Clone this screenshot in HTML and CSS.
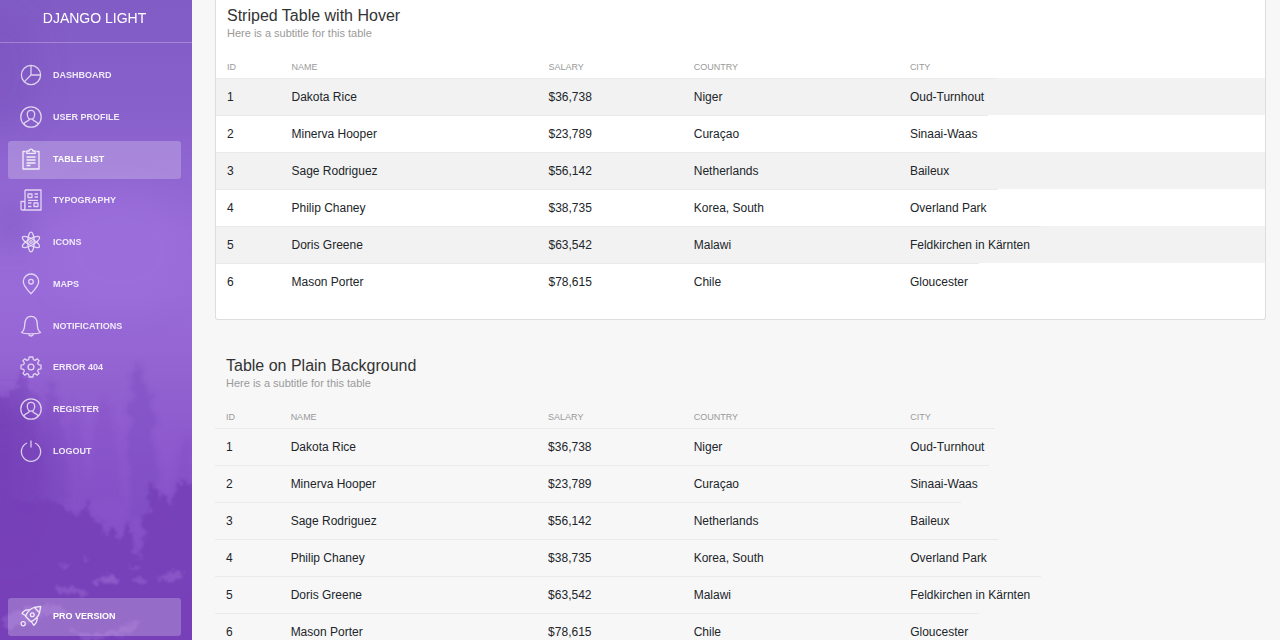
FILE: index.html
```html
<!DOCTYPE html>
<html lang="en">
<head>
<meta charset="utf-8">
<title>Table List</title>
<link rel="stylesheet" href="styles.css">
</head>
<body>
<div class="wrapper">
  <aside class="sidebar">
    <svg class="scene" viewBox="0 0 192 640" preserveAspectRatio="xMidYMid slice" aria-hidden="true">
      <defs>
        <linearGradient id="sky" x1="0" y1="0" x2="0" y2="1">
          <stop offset="0" stop-color="#815cc5"/>
          <stop offset=".17" stop-color="#8860cb"/>
          <stop offset=".36" stop-color="#976bd8"/>
          <stop offset=".46" stop-color="#996bd9"/>
          <stop offset=".58" stop-color="#9363d1"/>
          <stop offset=".74" stop-color="#8b56cc"/>
          <stop offset=".84" stop-color="#8650c8"/>
          <stop offset="1" stop-color="#7b44bd"/>
        </linearGradient>
        <linearGradient id="lefttree" x1="0" y1="0" x2="1" y2="0">
          <stop offset="0" stop-color="#743eb5" stop-opacity=".75"/>
          <stop offset="1" stop-color="#7a47bd" stop-opacity=".35"/>
        </linearGradient>
        <filter id="soft" x="-50%" y="-50%" width="200%" height="200%"><feGaussianBlur stdDeviation="14"/></filter>
        <filter id="rough" x="-20%" y="-20%" width="140%" height="140%">
          <feTurbulence type="fractalNoise" baseFrequency=".2" numOctaves="3" seed="4"/>
          <feDisplacementMap in="SourceGraphic" scale="12" xChannelSelector="R" yChannelSelector="G"/>
          <feGaussianBlur stdDeviation="1.1"/>
        </filter>
        <filter id="mist" x="-20%" y="-20%" width="140%" height="140%">
          <feTurbulence type="fractalNoise" baseFrequency=".15" numOctaves="3" seed="9"/>
          <feDisplacementMap in="SourceGraphic" scale="14" xChannelSelector="R" yChannelSelector="G"/>
          <feGaussianBlur stdDeviation="2"/>
        </filter>
      </defs>
      <rect width="192" height="640" fill="url(#sky)"/>
      <g filter="url(#soft)">
        <ellipse cx="10" cy="225" rx="20" ry="26" fill="#7e56c2" opacity=".5"/>
        <ellipse cx="120" cy="250" rx="70" ry="60" fill="#9e70de" opacity=".4"/>
        <ellipse cx="0" cy="70" rx="40" ry="60" fill="#7850bd" opacity=".4"/>
        <ellipse cx="10" cy="480" rx="46" ry="80" fill="#7440b7" opacity=".8"/>
      </g>
      <g filter="url(#mist)" fill="#7b49be">
        <path d="M138 362L144 382 154 395 147 398 158 425 150 430 160 475 148 520H130L127 440 133 420 124 415 134 395 129 385Z" opacity=".45"/>
        <path d="M103 392L111 415 116 440 123 500H86L93 435 98 410Z" opacity=".25"/>
        <path d="M52 380L60 410 66 440 70 500H36L43 430 46 400Z" opacity=".4"/>
        <path d="M75 395L82 430 88 500H62L69 430Z" opacity=".22"/>
        <path d="M186 430L192 445V520H170L177 470Z" opacity=".3"/>
      </g>
      <g filter="url(#rough)" fill="#7640b8">
        <path d="M22 362L27 390 40 397 30 405 39 426 31 436 42 470 36 515H-10V392L8 396 18 386Z" fill="url(#lefttree)"/>
        <path d="M-10 505L18 499 30 503 52 500 68 508 76 517 82 512 87 501 92 518 101 522 104 534 114 528 119 542 128 524 134 536 131 550 139 560 145 535 142 518 150 510 147 484 154 486 160 500 165 494 170 510 176 488 181 482 186 480 200 495V660H-10Z" opacity=".92"/>
      </g>
      <g filter="url(#rough)" fill="#a273da">
        <path d="M93 582Q107 570 121 580L115 584Q105 579 95 585Z" opacity=".5"/>
        <path d="M58 564L71 565 65 570ZM82 559L90 557 88 562ZM128 564L140 568 132 570Z" opacity=".4"/>
        <path d="M133 578L148 580 145 584 132 583ZM157 580L173 569 184 574 175 581Z" opacity=".4"/>
        <path d="M55 588Q70 584 90 592L84 596Q68 590 57 594Z" opacity=".4"/>
        <path d="M0 620Q25 604 60 605L70 614Q42 612 10 630ZM65 625Q90 640 120 628L140 620 132 632 85 642Z" opacity=".35"/>
      </g>
    </svg>
    <div class="sidebar-body">
      <div class="logo"><a href="#">DJANGO LIGHT</a></div>
      <nav>
        <ul class="nav">
          <li><a class="item" href="#"><svg class="icon" viewBox="0 0 22 22"><circle cx="11" cy="11" r="9.6"/><path d="M11 1.5V11H20.5M11 11L4.4 17.6"/></svg>Dashboard</a></li>
          <li><a class="item" href="#"><svg class="icon" viewBox="0 0 22 22"><circle cx="11" cy="11" r="10.2"/><path d="M11 4.3C8.6 4.3 7.3 6 7.3 8.3 7.3 11 8.8 13.2 11 13.2S14.7 11 14.7 8.3C14.7 6 13.4 4.3 11 4.3ZM9 12.5V14C8.5 15.2 5 15.4 3.8 18M13 12.5V14C13.5 15.2 17 15.4 18.2 18"/></svg>User Profile</a></li>
          <li><a class="item active" href="#"><svg class="icon" viewBox="0 0 22 22"><path d="M5.5 3.5H3V21H19V3.5H16.5M6.8 5.3V3H9.2Q9.2 1.2 11 1.2T12.8 3H15.2V5.3ZM6.5 9H15.5M6.5 12H15.5M6.5 15H15.5M6.5 17.5H10.5"/></svg>Table List</a></li>
          <li><a class="item" href="#"><svg class="icon" viewBox="0 0 22 22"><path d="M5 1H21V21H2.5Q1 21 1 19.5V12.5H4.8V19.5Q4.8 21 3 21M5 1V19M8 5H12V8.5H8ZM14.5 5H18M14.5 8H18M8 11.3H18M8 14H11.5M8 17.5H11.5M14 14H18V17.5H14Z"/></svg>Typography</a></li>
          <li><a class="item" href="#"><svg class="icon" viewBox="0 0 22 22"><ellipse cx="11" cy="11" rx="3.2" ry="9.8"/><ellipse cx="11" cy="11" rx="3.2" ry="9.8" transform="rotate(60 11 11)"/><ellipse cx="11" cy="11" rx="3.2" ry="9.8" transform="rotate(120 11 11)"/><circle cx="11" cy="11" r="1.3"/></svg>Icons</a></li>
          <li><a class="item" href="#"><svg class="icon" viewBox="0 0 22 22"><path d="M11 20.7Q3.3 12.8 3.3 8.5A7.7 7.5 0 0 1 18.7 8.5Q18.7 12.8 11 20.7Z"/><circle cx="11" cy="8.7" r="2.3"/></svg>Maps</a></li>
          <li><a class="item" href="#"><svg class="icon" viewBox="0 0 22 22"><path d="M1.5 17.5Q4.7 15 4.7 9.5C4.7 4.5 7 1.3 11 1.3S17.3 4.5 17.3 9.5Q17.3 15 20.5 17.5 18.5 18.8 11 18.8T1.5 17.5ZM8.5 19Q9 21 11 21T13.5 19"/></svg>Notifications</a></li>
          <li><a class="item" href="#"><svg class="icon" viewBox="0 0 22 22"><path d="M9.2 1H12.8L13.4 3.7 15 4.4 17.3 2.9 19.1 4.7 17.6 7 18.3 8.6 21 9.2V12.8L18.3 13.4 17.6 15 19.1 17.3 17.3 19.1 15 17.6 13.4 18.3 12.8 21H9.2L8.6 18.3 7 17.6 4.7 19.1 2.9 17.3 4.4 15 3.7 13.4 1 12.8V9.2L3.7 8.6 4.4 7 2.9 4.7 4.7 2.9 7 4.4 8.6 3.7Z"/><circle cx="11" cy="11" r="2.9"/></svg>Error 404</a></li>
          <li><a class="item" href="#"><svg class="icon" viewBox="0 0 22 22"><circle cx="11" cy="11" r="10.2"/><path d="M11 4.3C8.6 4.3 7.3 6 7.3 8.3 7.3 11 8.8 13.2 11 13.2S14.7 11 14.7 8.3C14.7 6 13.4 4.3 11 4.3ZM9 12.5V14C8.5 15.2 5 15.4 3.8 18M13 12.5V14C13.5 15.2 17 15.4 18.2 18"/></svg>Register</a></li>
          <li><a class="item" href="#"><svg class="icon" viewBox="0 0 22 22"><path d="M11 .5V7.5M7 3A9.6 9.6 0 1 0 15 3"/></svg>Logout</a></li>
        </ul>
      </nav>
      <a class="item pro" href="#"><svg class="icon" viewBox="0 0 22 22"><path d="M20.7 1.3L19.5 8C18 12.5 14.5 15 10.8 16.7L5.5 11.3C7 7.5 10 3.8 14 2.5ZM14.5 2.5L19.3 7.5M9.5 5Q4.5 4 2 8.5L5.8 10.8M17.3 12.5Q17.3 17.5 13.8 20.3L11.3 16.5"/><circle cx="12.3" cy="9.8" r="1.9"/><circle cx="3.2" cy="18.8" r="2.1"/></svg>Pro Version</a>
    </div>
  </aside>

  <main class="content">
    <section class="card">
      <h4 class="title">Striped Table with Hover</h4>
      <p class="subtitle">Here is a subtitle for this table</p>
      <table class="table striped">
        <thead><tr><th scope="col">ID</th><th scope="col">Name</th><th scope="col">Salary</th><th scope="col">Country</th><th scope="col">City</th></tr></thead>
        <tbody>
          <tr><td>1</td><td>Dakota Rice</td><td>$36,738</td><td>Niger</td><td>Oud-Turnhout</td></tr>
          <tr><td>2</td><td>Minerva Hooper</td><td>$23,789</td><td>Curaçao</td><td>Sinaai-Waas</td></tr>
          <tr><td>3</td><td>Sage Rodriguez</td><td>$56,142</td><td>Netherlands</td><td>Baileux</td></tr>
          <tr><td>4</td><td>Philip Chaney</td><td>$38,735</td><td>Korea, South</td><td>Overland Park</td></tr>
          <tr><td>5</td><td>Doris Greene</td><td>$63,542</td><td>Malawi</td><td>Feldkirchen in Kärnten</td></tr>
          <tr><td>6</td><td>Mason Porter</td><td>$78,615</td><td>Chile</td><td>Gloucester</td></tr>
        </tbody>
      </table>
    </section>
    <section class="plain">
      <h4 class="title">Table on Plain Background</h4>
      <p class="subtitle">Here is a subtitle for this table</p>
      <table class="table">
        <thead><tr><th scope="col">ID</th><th scope="col">Name</th><th scope="col">Salary</th><th scope="col">Country</th><th scope="col">City</th></tr></thead>
        <tbody>
          <tr><td>1</td><td>Dakota Rice</td><td>$36,738</td><td>Niger</td><td>Oud-Turnhout</td></tr>
          <tr><td>2</td><td>Minerva Hooper</td><td>$23,789</td><td>Curaçao</td><td>Sinaai-Waas</td></tr>
          <tr><td>3</td><td>Sage Rodriguez</td><td>$56,142</td><td>Netherlands</td><td>Baileux</td></tr>
          <tr><td>4</td><td>Philip Chaney</td><td>$38,735</td><td>Korea, South</td><td>Overland Park</td></tr>
          <tr><td>5</td><td>Doris Greene</td><td>$63,542</td><td>Malawi</td><td>Feldkirchen in Kärnten</td></tr>
          <tr><td>6</td><td>Mason Porter</td><td>$78,615</td><td>Chile</td><td>Gloucester</td></tr>
        </tbody>
      </table>
    </section>
  </main>
</div>
</body>
</html>
```
FILE: styles.css
```css
* { box-sizing: border-box; }
body {
  margin: 0;
  font-family: "Liberation Sans", Arial, sans-serif;
  font-size: 12px;
  line-height: 18px;
  color: #212529;
  background: #f7f7f8;
}
.wrapper { display: flex; height: 100vh; overflow: hidden; }

.sidebar { position: relative; flex: 0 0 192px; background: #7b44bd; }
.scene { position: absolute; inset: 0; width: 100%; height: 100%; }
.sidebar-body { position: relative; display: flex; flex-direction: column; height: 100%; }
.logo {
  padding: 9px 0 15px;
  border-bottom: 1px solid rgba(255, 255, 255, .25);
  font-size: 14px;
  text-align: center;
}
.logo a { color: #fff; text-decoration: none; margin-right: 3px; }
.nav {
  display: flex;
  flex-direction: column;
  justify-content: space-between;
  height: 414px;
  margin: 14px 0 0;
  padding: 0;
  list-style: none;
}
.item {
  display: flex;
  align-items: center;
  gap: 11px;
  height: 38px;
  margin: 0 11px 0 8px;
  padding: 0 12px 2px;
  border-radius: 3px;
  font-size: 9px;
  font-weight: 700;
  text-transform: uppercase;
  text-decoration: none;
  color: rgba(255, 255, 255, .86);
}
.item.active { background: rgba(255, 255, 255, .23); color: #fff; }
.item.pro { margin-top: auto; margin-bottom: 4px; background: rgba(255, 255, 255, .23); color: #fff; }
.icon {
  flex: none;
  width: 22px;
  height: 22px;
  fill: none;
  stroke: currentColor;
  stroke-width: 1.3;
  stroke-linejoin: round;
  opacity: .85;
}

.content { flex: 1; min-width: 0; padding: 0 14px 0 23px; }
.card {
  padding: 5px 0 19px;
  background: #fff;
  border: 1px solid #dedede;
  border-top: 0;
  border-radius: 0 0 3px 3px;
}
.plain { padding-top: 35px; }
.title { margin: 0 11px; font-size: 16px; line-height: 21px; font-weight: 400; color: #333; }
.subtitle { margin: 0 11px 18px; font-size: 11px; line-height: 14px; color: #9a9a9a; }

.table { display: block; width: 100%; }
.table thead, .table tbody { display: block; }
.table tr { display: flex; }
.table th, .table td { flex: none; padding: 9px 11px; text-align: left; }
.table th {
  padding: 0 11px 2px;
  font-size: 9px;
  font-weight: 400;
  text-transform: uppercase;
  color: #9a9a9a;
}
.table td { border-top: 1px solid #e9eaeb; }
.table tr > :nth-child(1) { width: 6.15%; }
.table tr > :nth-child(2) { width: 24.5%; }
.table tr > :nth-child(3) { width: 13.85%; }
.table tr > :nth-child(4) { width: 20.6%; }
.striped tbody tr:nth-child(odd) { background: #f2f2f2; }
```
